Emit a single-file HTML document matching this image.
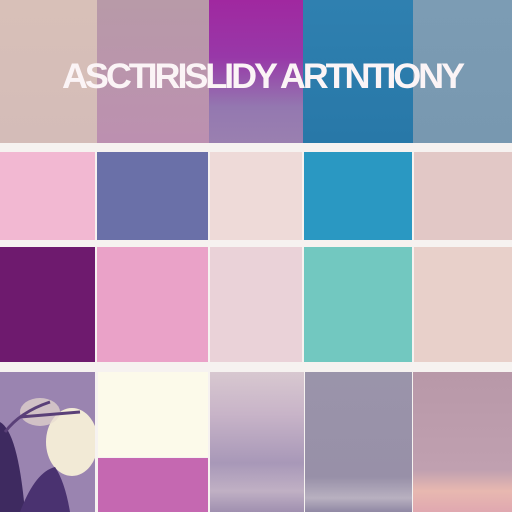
<!DOCTYPE html>
<html><head><meta charset="utf-8"><style>
html,body{margin:0;padding:0;width:512px;height:512px;overflow:hidden;background:#f6f2f0}
.c{position:absolute}
</style></head><body>
<div class="c" style="left:0;top:0;width:97px;height:143px;background:linear-gradient(#d8c0b8,#d4bcb8)"></div>
<div class="c" style="left:97px;top:0;width:112px;height:143px;background:linear-gradient(#b89aa8,#bc90b0)"></div>
<div class="c" style="left:209px;top:0;width:94px;height:143px;background:linear-gradient(#a028a0 0%,#9838a8 40%,#9478b0 75%,#9a80b0)"></div>
<div class="c" style="left:303px;top:0;width:110px;height:143px;background:linear-gradient(#2f80b0,#2878a8)"></div>
<div class="c" style="left:413px;top:0;width:99px;height:143px;background:linear-gradient(#7c9cb4,#7898b0)"></div>
<div class="c" style="left:0;top:152px;width:95px;height:88px;background:#f2b8d2"></div>
<div class="c" style="left:97px;top:152px;width:111px;height:88px;background:#6a70a8"></div>
<div class="c" style="left:210px;top:152px;width:92px;height:88px;background:#eedad8"></div>
<div class="c" style="left:304px;top:152px;width:108px;height:88px;background:#2a98c2"></div>
<div class="c" style="left:414px;top:152px;width:98px;height:88px;background:#e2c8c6"></div>
<div class="c" style="left:0;top:247px;width:95px;height:115px;background:#6e1a6e"></div>
<div class="c" style="left:97px;top:247px;width:111px;height:115px;background:#eaa2c8"></div>
<div class="c" style="left:210px;top:247px;width:92px;height:115px;background:#ead2d8"></div>
<div class="c" style="left:304px;top:247px;width:108px;height:115px;background:#72c8c0"></div>
<div class="c" style="left:414px;top:247px;width:98px;height:115px;background:#e8d0ca"></div>
<div class="c" style="left:0;top:372px;width:95px;height:140px;background:#9a84b0"></div>
<svg class="c" style="left:0;top:372px" width="95" height="140">
<ellipse cx="72" cy="70" rx="26" ry="34" fill="#f2ead6"/>
<ellipse cx="40" cy="40" rx="20" ry="14" fill="#e8dcd0" opacity=".7"/>
<path d="M0 50 Q18 60 25 140 L0 140Z" fill="#3e2a60"/>
<path d="M20 140 Q35 100 55 95 Q65 110 70 140Z" fill="#4a3270"/>
<path d="M5 60 Q20 40 50 30 M20 45 L80 40" stroke="#5a4078" stroke-width="3" fill="none"/>
</svg>
<div class="c" style="left:98px;top:372px;width:110px;height:85px;background:#fcfaea"></div>
<div class="c" style="left:98px;top:458px;width:110px;height:54px;background:#c568b1"></div>
<div class="c" style="left:210px;top:372px;width:94px;height:140px;background:linear-gradient(#d8c8d0,#c8b4c8 30%,#a898b8 65%,#c0b0c4 85%,#a090b0)"></div>
<div class="c" style="left:305px;top:372px;width:107px;height:140px;background:linear-gradient(#9a94aa,#9890a8 75%,#b8b0c0 90%,#9088a4)"></div>
<div class="c" style="left:413px;top:372px;width:99px;height:140px;background:linear-gradient(#b898a8,#c0a0b0 70%,#e8b8b0 85%,#e0a8b0)"></div>
<svg class="c" style="left:0;top:0" width="512" height="140">
<text x="62" y="88" textLength="400" lengthAdjust="spacingAndGlyphs" font-family="Liberation Sans, sans-serif" font-weight="bold" font-size="35" fill="#fbf4f6" letter-spacing="-3">ASCTIRISLIDY ARTNTIONY</text>
</svg>
</body></html>
